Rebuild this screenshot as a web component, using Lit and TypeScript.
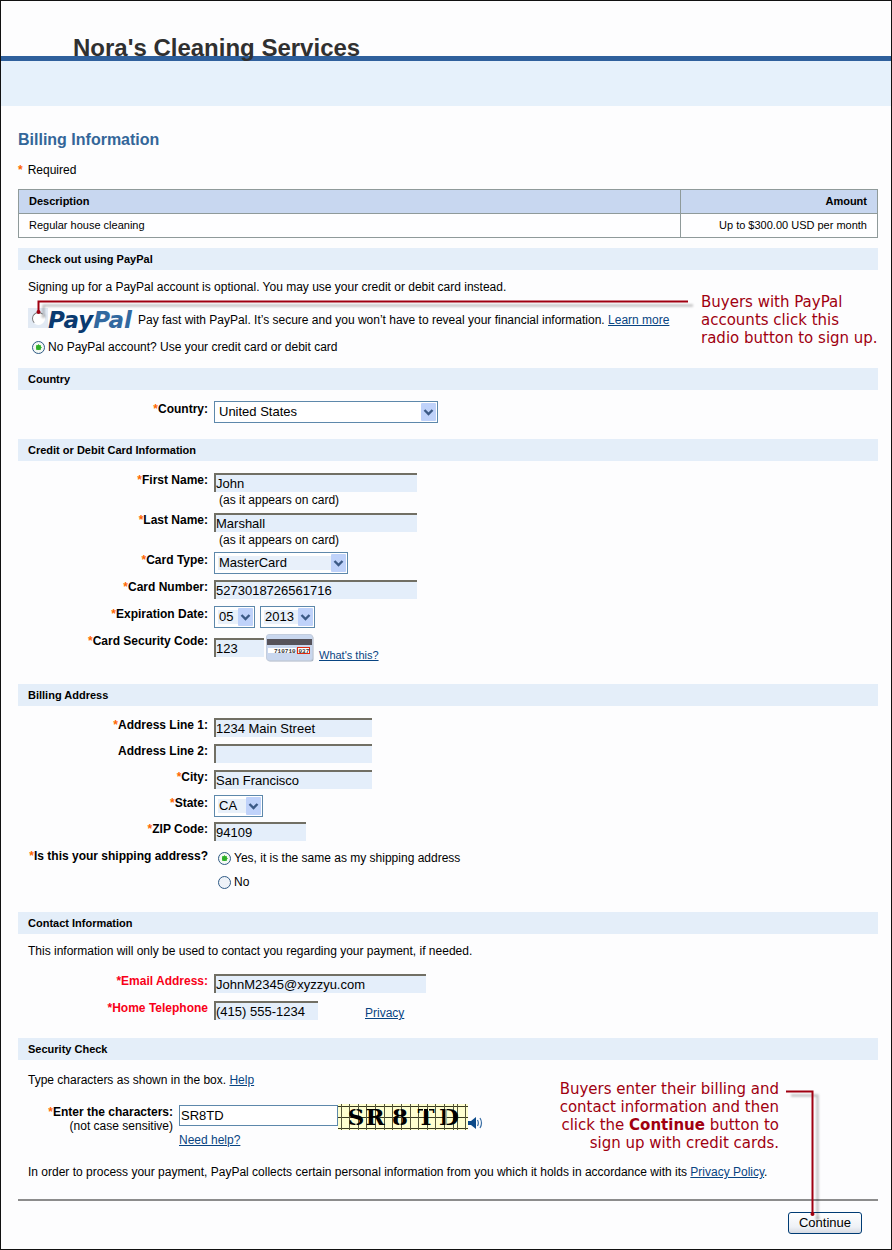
import { LitElement, html, css, svg, nothing } from "lit";
import { customElement, property } from "lit/decorators.js";

@customElement("section-bar")
class SectionBar extends LitElement {
  static styles = css`
    :host { display: block; }
    .bar {
      margin: 0;
      padding: 0 10px;
      background: #e4eef9;
      font-size: 11px;
      line-height: 22px;
      font-weight: bold;
      color: #000;
    }
  `;
  render() {
    return html`<h2 class="bar"><slot></slot></h2>`;
  }
}

const star = html`<span class="star">*</span>`;

@customElement("app-root")
class AppRoot extends LitElement {
  @property() company = "Nora's Cleaning Services";

  static styles = css`
    :host {
      display: block;
      font-family: "Liberation Sans", Arial, sans-serif;
      font-size: 12px;
      line-height: 16px;
      color: #000;
    }
    .page {
      border: 1px solid #111;
      background: #fdfdfe;
      min-height: 100vh;
      box-sizing: border-box;
    }
    .title {
      position: relative;
      z-index: 1;
      margin: 0;
      padding: 33px 0 0 72px;
      font-size: 24px;
      line-height: 28px;
      color: #303030;
    }
    .rule { height: 5px; margin-top: -6px; background: #2f609c; }
    .band { height: 45px; background: #e6f1fb; }
    main { padding: 24px 13px 15px 17px; }
    .heading { margin: 0; font-size: 16px; line-height: 20px; color: #336699; }
    p { margin: 0; }
    .required { margin: 12px 0 11px; }
    .star { color: #ff6600; }
    .required .star { margin-right: 5px; font-weight: bold; }

    .items { width: 100%; border-collapse: collapse; font-size: 11px; line-height: 16px; }
    .items th, .items td { border: 1px solid #8f9a9a; padding: 3px 10px 4px; text-align: left; }
    .items td { background: #fefeff; }
    .items th { background: #c8d7f0; }
    .items .amount { width: 176px; text-align: right; }

    section { position: relative; }
    .checkout { margin-top: 10px; padding-bottom: 13px; }
    .country { padding-bottom: 11px; }
    .card { padding-bottom: 21px; }
    .address { padding-bottom: 22px; }
    .contact { padding-bottom: 11px; }
    .text { padding: 9px 10px 0; }
    .security .text { padding-top: 12px; }

    a { color: #084482; text-decoration: underline; }

    .pay { display: flex; align-items: center; height: 24px; padding-left: 10px; margin-top: 13px; }
    .swatch { display: flex; align-items: center; justify-content: center; width: 20px; height: 20px; background: #e2eaf4; margin-bottom: 4px; }
    .logo { width: 86px; height: 24px; margin-right: 4px; overflow: visible; }
    .logo text { font-family: "DejaVu Sans", Verdana, sans-serif; font-weight: bold; font-style: italic; font-size: 23px; }
    .choice { display: flex; align-items: center; gap: 3px; height: 16px; }
    .guest { margin-top: 7px; padding-left: 14px; }

    .radio {
      appearance: none;
      flex: none;
      box-sizing: border-box;
      width: 13px;
      height: 13px;
      margin: 0;
      border: 1px solid #2f5a85;
      border-radius: 50%;
      background: #eef2f8;
    }
    .radio:checked { background: radial-gradient(circle, #2fae2a 0 2px, #6fcf66 3px, #f4f8f4 3px); }
    .radio.flat { background: #fff; border-color: #777 #fff #fff #777; }

    .rows { padding-top: 11px; }
    .contact .rows { padding-top: 14px; }
    .row { display: grid; grid-template-columns: 190px 1fr; column-gap: 6px; min-height: 27px; }
    .address .row { min-height: 26px; }
    .address .row.tall { min-height: 27px; }
    .row.noted { min-height: 40px; }
    .label { text-align: right; font-weight: bold; }
    .alert, .alert .star { color: #f80018; }
    .note { display: block; padding-left: 5px; }

    .input {
      display: block;
      box-sizing: border-box;
      height: 19px;
      margin: 1px 0 0;
      padding: 0;
      border: 0 solid #716f64;
      border-width: 2px 0 0 2px;
      border-radius: 0;
      background: #e4eefa;
      font: 13px/16px "Liberation Sans", Arial, sans-serif;
      color: #000;
    }
    .w-name { width: 203px; }
    .w-line { width: 158px; }
    .w-zip { width: 92px; }
    .w-code { width: 50px; }
    .w-mail { width: 212px; }
    .w-phone { width: 104px; }

    .drop { display: inline-grid; vertical-align: top; }
    .drop > * { grid-area: 1 / 1; }
    .select {
      appearance: none;
      box-sizing: border-box;
      height: 22px;
      margin: 0;
      padding: 0 18px 0 4px;
      border: 1px solid #5d88ab;
      border-radius: 0;
      background: #e8f0fa;
      box-shadow: inset 0 0 0 3px #fff;
      font: 13px/18px "Liberation Sans", Arial, sans-serif;
      color: #000;
    }
    .select.plain { background: #fff; }
    .arrow { justify-self: end; align-self: center; width: 15px; height: 18px; margin-right: 2px; pointer-events: none; }
    .s-country { width: 224px; }
    .s-type { width: 134px; }
    .s-month { width: 41px; }
    .s-year { width: 55px; }
    .s-state { width: 49px; }
    .pair { display: flex; align-items: flex-start; gap: 5px; }

    .code { display: flex; align-items: flex-start; gap: 2px; padding-top: 1px; font-size: 11px; }
    .code .input { margin-top: 4px; }
    .code a { margin: 13px 0 0 3px; }
    .mini { width: 48px; height: 28px; }
    .mini text { font-family: "Liberation Mono", monospace; font-weight: bold; font-size: 6px; }

    .answers { display: grid; gap: 8px; padding: 2px 0 0 4px; }
    .phone { display: flex; gap: 47px; }
    .phone a { margin-top: 5px; }

    .captcha { display: grid; grid-template-columns: 155px 1fr; column-gap: 6px; padding-top: 16px; line-height: 14px; }
    .captcha .label { padding-top: 1px; }
    .captcha small { display: block; font-size: 12px; font-weight: normal; }
    .entry { display: flex; }
    .captcha .input { width: 159px; height: 21px; padding: 0 1px; border: 1px solid #5d88ab; background: #fff; }
    .puzzle { width: 130px; height: 26px; overflow: visible; }
    .puzzle text { font-family: "DejaVu Serif", serif; font-weight: bold; font-size: 23px; }
    .sound { align-self: flex-end; width: 15px; height: 14px; padding: 0; border: 0; background: none; }
    .sound svg { display: block; }
    .help { display: inline-block; line-height: 16px; margin-top: 2px; }
    .security .legal { padding-top: 16px; }

    .divider { height: 2px; margin: 19px 0 11px; border: 0; background: #8c8c8c; }
    .actions { display: flex; justify-content: flex-end; padding-right: 16px; }
    .continue {
      width: 74px;
      height: 22px;
      padding: 0;
      border: 1px solid #003c74;
      border-radius: 3px;
      background: linear-gradient(#ffffff, #eef1f6 70%, #d6dae2);
      font: 13px/18px "Liberation Sans", Arial, sans-serif;
      color: #000;
    }

    .callout {
      position: absolute;
      font-family: "DejaVu Sans", Verdana, sans-serif;
      font-size: 15px;
      line-height: 18px;
      color: #a00010;
      white-space: nowrap;
    }
    .first { left: 683px; top: 45px; }
    .second { right: 99px; top: 42px; text-align: right; }
    .pointer { position: absolute; overflow: visible; pointer-events: none; filter: drop-shadow(5px 4px 1px rgba(0, 0, 0, 0.28)); }
    .p-first { left: 18px; top: 52px; }
    .p-second { right: 62px; top: 51px; }
  `;

  private drop(id: string, value: string, size: string, label = "", plain = false) {
    return html`<span class="drop">
      <select id=${id} class="select ${size} ${plain ? "plain" : ""}" aria-label=${label || nothing}>
        <option selected>${value}</option>
      </select>
      <svg class="arrow" viewBox="0 0 15 18" aria-hidden="true">
        <rect width="15" height="18" rx="1" fill="#bfd2fa" />
        <path d="M3.5 7L7.5 11L11.5 7" fill="none" stroke="#3c5a86" stroke-width="2.4" />
      </svg>
    </span>`;
  }

  private row(id: string, label: string, value: string, size: string, note = "", required = true) {
    return html`<div class="row ${note ? "noted" : ""}">
      <label class="label" for=${id}>${required ? star : nothing}${label}</label>
      <div>
        <input class="input ${size}" id=${id} type="text" .value=${value} />
        ${note ? html`<span class="note">${note}</span>` : nothing}
      </div>
    </div>`;
  }

  private puzzle() {
    const columns = [3, 11, 20, 28, 37, 46, 54, 63, 72, 80, 89, 97, 106, 115, 119, 127];
    const letters: [string, number][] = [["S", 18], ["R", 37], ["8", 62], ["T", 88], ["D", 111]];
    return html`<svg class="puzzle" viewBox="0 0 130 26" role="img" aria-label="Security characters">
      <rect width="130" height="26" fill="#ffffd0" />
      <path d="M0 2.5H130M0 13.5H130M0 24.5H130" stroke="#3a3a20" />
      ${columns.map((x) => svg`<path d="M${x + 0.5} 0V26" stroke="#55553a" />`)}
      ${letters.map(([c, x]) => svg`<text x=${x} y="21" text-anchor="middle">${c}</text>`)}
      <path d="M18 3V7M18 18V22M62 3V7M62 18V22M85.5 4V7M90.5 4V7M108 4V21" stroke="#ffffd0" />
    </svg>`;
  }

  render() {
    return html`<div class="page">
      <header>
        <h1 class="title">${this.company}</h1>
        <div class="rule"></div>
        <div class="band"></div>
      </header>
      <main>
        <h2 class="heading">Billing Information</h2>
        <p class="required">${star}Required</p>
        <table class="items">
          <thead><tr><th>Description</th><th class="amount">Amount</th></tr></thead>
          <tbody><tr><td>Regular house cleaning</td><td class="amount">Up to $300.00 USD per month</td></tr></tbody>
        </table>

        <section class="checkout">
          <section-bar>Check out using PayPal</section-bar>
          <p class="text">Signing up for a PayPal account is optional. You may use your credit or debit card instead.</p>
          <div class="pay">
            <span class="swatch"><input class="radio flat" type="radio" name="method" id="paypal" /></span>
            <svg class="logo" viewBox="0 0 86 24" role="img" aria-label="PayPal">
              <text x="0" y="20" fill="#0a3a70">Pay<tspan fill="#3269a0">Pal</tspan></text>
            </svg>
            <span><label for="paypal">Pay fast with PayPal. It’s secure and you won’t have to reveal your financial information.</label> <a href="#learn">Learn more</a></span>
          </div>
          <label class="choice guest"><input class="radio" type="radio" name="method" checked />No PayPal account? Use your credit card or debit card</label>
          <svg class="pointer p-first" width="654" height="16" aria-hidden="true">
            <path d="M652 1.5H2.5V12" fill="none" stroke="#a00010" stroke-width="2" />
            <circle cx="2.5" cy="12" r="2" fill="#a00010" />
          </svg>
          <div class="callout first">Buyers with PayPal<br />accounts click this<br />radio button to sign up.</div>
        </section>

        <section class="country">
          <section-bar>Country</section-bar>
          <div class="rows">
            <div class="row">
              <label class="label" for="country">${star}Country:</label>
              <div>${this.drop("country", "United States", "s-country", "", true)}</div>
            </div>
          </div>
        </section>

        <section class="card">
          <section-bar>Credit or Debit Card Information</section-bar>
          <div class="rows">
            ${this.row("first", "First Name:", "John", "w-name", "(as it appears on card)")}
            ${this.row("last", "Last Name:", "Marshall", "w-name", "(as it appears on card)")}
            <div class="row">
              <label class="label" for="type">${star}Card Type:</label>
              <div>${this.drop("type", "MasterCard", "s-type")}</div>
            </div>
            ${this.row("number", "Card Number:", "5273018726561716", "w-name")}
            <div class="row">
              <label class="label" for="month">${star}Expiration Date:</label>
              <div class="pair">${this.drop("month", "05", "s-month")}${this.drop("year", "2013", "s-year", "Expiration year")}</div>
            </div>
            <div class="row">
              <label class="label" for="code">${star}Card Security Code:</label>
              <div class="code">
                <input class="input w-code" id="code" type="text" .value=${"123"} />
                <svg class="mini" viewBox="0 0 48 28" aria-hidden="true">
                  <rect x="1.5" y="1.5" width="46" height="26" rx="2.5" fill="#a9b4c4" />
                  <rect x="0.5" y="0.5" width="46" height="26" rx="2.5" fill="#c9d7ee" stroke="#c3cddd" />
                  <rect x="1" y="5" width="45" height="6" fill="#55525a" />
                  <rect x="2" y="14" width="28" height="5" fill="#fff" />
                  <text x="8" y="18.5" fill="#333">710710</text>
                  <rect x="31.5" y="13.5" width="12" height="6" fill="#fff" stroke="#e02a10" />
                  <text x="32.5" y="18.5" fill="#333">037</text>
                </svg>
                <a href="#code-help">What's this?</a>
              </div>
            </div>
          </div>
        </section>

        <section class="address">
          <section-bar>Billing Address</section-bar>
          <div class="rows">
            ${this.row("line1", "Address Line 1:", "1234 Main Street", "w-line")}
            ${this.row("line2", "Address Line 2:", "", "w-line", "", false)}
            ${this.row("city", "City:", "San Francisco", "w-line")}
            <div class="row">
              <label class="label" for="state">${star}State:</label>
              <div>${this.drop("state", "CA", "s-state")}</div>
            </div>
            <div class="row tall">
              <label class="label" for="zip">${star}ZIP Code:</label>
              <div><input class="input w-zip" id="zip" type="text" .value=${"94109"} /></div>
            </div>
            <div class="row" role="radiogroup" aria-labelledby="ship">
              <span class="label" id="ship">${star}Is this your shipping address?</span>
              <div class="answers">
                <label class="choice"><input class="radio" type="radio" name="ship" checked />Yes, it is the same as my shipping address</label>
                <label class="choice"><input class="radio" type="radio" name="ship" />No</label>
              </div>
            </div>
          </div>
        </section>

        <section class="contact">
          <section-bar>Contact Information</section-bar>
          <p class="text">This information will only be used to contact you regarding your payment, if needed.</p>
          <div class="rows">
            <div class="row">
              <label class="label alert" for="email">${star}Email Address:</label>
              <div><input class="input w-mail" id="email" type="text" .value=${"JohnM2345@xyzzyu.com"} /></div>
            </div>
            <div class="row">
              <label class="label alert" for="phone">${star}Home Telephone</label>
              <div class="phone"><input class="input w-phone" id="phone" type="text" .value=${"(415) 555-1234"} /><a href="#privacy">Privacy</a></div>
            </div>
          </div>
        </section>

        <section class="security">
          <section-bar>Security Check</section-bar>
          <p class="text">Type characters as shown in the box. <a href="#help">Help</a></p>
          <div class="captcha">
            <label class="label" for="captcha">${star}Enter the characters:<small>(not case sensitive)</small></label>
            <div>
              <div class="entry">
                <input class="input" id="captcha" type="text" .value=${"SR8TD"} />
                ${this.puzzle()}
                <button class="sound" type="button" aria-label="Play audio">
                  <svg width="15" height="14" viewBox="0 0 15 14">
                    <path d="M0 5H3L8 1V13L3 9H0Z" fill="#0b4a8a" />
                    <path d="M9.5 4Q11.2 7 9.5 10M12 2Q15 7 12 12" fill="none" stroke="#3b6fa5" stroke-width="1.2" />
                  </svg>
                </button>
              </div>
              <a class="help" href="#need-help">Need help?</a>
            </div>
          </div>
          <p class="text legal">In order to process your payment, PayPal collects certain personal information from you which it holds in accordance with its <a href="#policy">Privacy Policy</a>.</p>
          <hr class="divider" />
          <div class="actions"><button class="continue" type="submit">Continue</button></div>
          <div class="callout second">Buyers enter their billing and<br />contact information and then<br />click the <b>Continue</b> button to<br />sign up with credit cards.</div>
          <svg class="pointer p-second" width="30" height="130" aria-hidden="true">
            <path d="M0 2.5H26.5V125" fill="none" stroke="#a00010" stroke-width="2" />
            <circle cx="26.5" cy="125" r="2" fill="#a00010" />
          </svg>
        </section>
      </main>
    </div>`;
  }
}
